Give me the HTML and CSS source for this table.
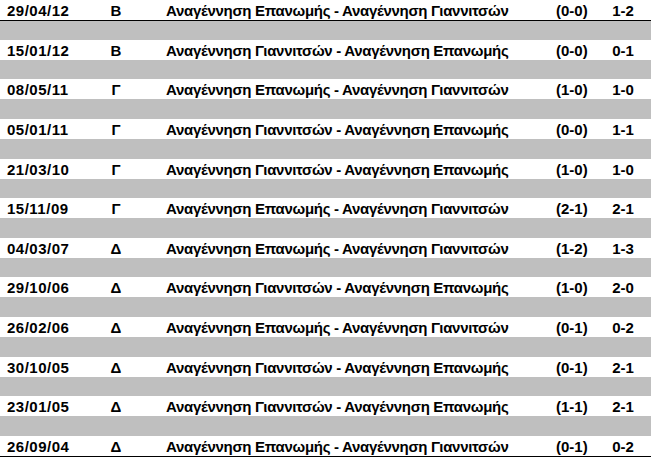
FILE: index.html
```html
<!DOCTYPE html>
<html>
<head>
<meta charset="utf-8">
<link rel="stylesheet" href="styles.css">
</head>
<body>
<div class="sheet">
  <div class="row first"><span class="date">29/04/12</span><span class="div">Β</span><span class="match">Αναγέννηση Επανωμής - Αναγέννηση Γιαννιτσών</span><span class="ht">(0-0)</span><span class="ft">1-2</span></div>
  <div class="sep"></div>
  <div class="row"><span class="date">15/01/12</span><span class="div">Β</span><span class="match">Αναγέννηση Γιαννιτσών - Αναγέννηση Επανωμής</span><span class="ht">(0-0)</span><span class="ft">0-1</span></div>
  <div class="sep"></div>
  <div class="row"><span class="date">08/05/11</span><span class="div">Γ</span><span class="match">Αναγέννηση Επανωμής - Αναγέννηση Γιαννιτσών</span><span class="ht">(1-0)</span><span class="ft">1-0</span></div>
  <div class="sep"></div>
  <div class="row"><span class="date">05/01/11</span><span class="div">Γ</span><span class="match">Αναγέννηση Γιαννιτσών - Αναγέννηση Επανωμής</span><span class="ht">(0-0)</span><span class="ft">1-1</span></div>
  <div class="sep"></div>
  <div class="row"><span class="date">21/03/10</span><span class="div">Γ</span><span class="match">Αναγέννηση Γιαννιτσών - Αναγέννηση Επανωμής</span><span class="ht">(1-0)</span><span class="ft">1-0</span></div>
  <div class="sep"></div>
  <div class="row"><span class="date">15/11/09</span><span class="div">Γ</span><span class="match">Αναγέννηση Επανωμής - Αναγέννηση Γιαννιτσών</span><span class="ht">(2-1)</span><span class="ft">2-1</span></div>
  <div class="sep"></div>
  <div class="row"><span class="date">04/03/07</span><span class="div">Δ</span><span class="match">Αναγέννηση Επανωμής - Αναγέννηση Γιαννιτσών</span><span class="ht">(1-2)</span><span class="ft">1-3</span></div>
  <div class="sep"></div>
  <div class="row"><span class="date">29/10/06</span><span class="div">Δ</span><span class="match">Αναγέννηση Γιαννιτσών - Αναγέννηση Επανωμής</span><span class="ht">(1-0)</span><span class="ft">2-0</span></div>
  <div class="sep"></div>
  <div class="row"><span class="date">26/02/06</span><span class="div">Δ</span><span class="match">Αναγέννηση Επανωμής - Αναγέννηση Γιαννιτσών</span><span class="ht">(0-1)</span><span class="ft">0-2</span></div>
  <div class="sep"></div>
  <div class="row"><span class="date">30/10/05</span><span class="div">Δ</span><span class="match">Αναγέννηση Γιαννιτσών - Αναγέννηση Επανωμής</span><span class="ht">(0-1)</span><span class="ft">2-1</span></div>
  <div class="sep"></div>
  <div class="row"><span class="date">23/01/05</span><span class="div">Δ</span><span class="match">Αναγέννηση Γιαννιτσών - Αναγέννηση Επανωμής</span><span class="ht">(1-1)</span><span class="ft">2-1</span></div>
  <div class="sep"></div>
  <div class="row last"><span class="date">26/09/04</span><span class="div">Δ</span><span class="match">Αναγέννηση Επανωμής - Αναγέννηση Γιαννιτσών</span><span class="ht">(0-1)</span><span class="ft">0-2</span></div>
</div>
</body>
</html>
```

FILE: styles.css
```css
html, body {
  margin: 0;
  padding: 0;
  background: #ffffff;
}

.sheet {
  width: 651px;
  display: flex;
  flex-direction: column;
  font-family: "Liberation Sans", Arial, sans-serif;
  font-weight: bold;
  font-size: 15px;
  color: #000000;
}

.row {
  height: 20px;
  display: flex;
  align-items: flex-start;
  padding-top: 3px;
  box-sizing: border-box;
  line-height: 16px;
  white-space: nowrap;
  background: #ffffff;
}

.row.first {
  border-bottom: 1px solid #000000;
  height: 21px;
}

.row.last {
  border-bottom: 1px solid #000000;
  height: 21px;
}

.sep {
  height: 19.636px;
  background: #bfbfbf;
}

.row.first + .sep {
  height: 18.636px;
}

.date {
  width: 90px;
  padding-left: 7px;
  box-sizing: border-box;
  letter-spacing: 0.5px;
}

.div {
  width: 52px;
  text-align: center;
}

.match {
  width: 390px;
  padding-left: 24px;
  box-sizing: border-box;
  letter-spacing: -0.3px;
}

.ht {
  width: 70px;
  padding-left: 24px;
  box-sizing: border-box;
}

.ft {
  width: 49px;
  padding-right: 7px;
  box-sizing: border-box;
  text-align: center;
}
```
